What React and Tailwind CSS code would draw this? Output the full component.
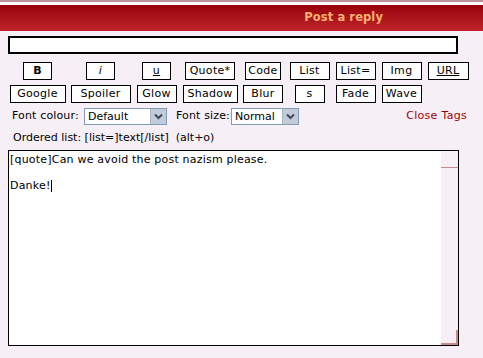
const row1 = [
  { label: 'B', w: 'w-[29px]', cls: 'font-bold' },
  { label: 'i', w: 'w-[29px]', cls: 'italic' },
  { label: 'u', w: 'w-[29px]', cls: 'underline' },
  { label: 'Quote*', w: 'w-[50px]' },
  { label: 'Code', w: 'w-[36px]' },
  { label: 'List', w: 'w-[40px]' },
  { label: 'List=', w: 'w-[40px]' },
  { label: 'Img', w: 'w-[40px]' },
  { label: 'URL', w: 'w-[41px]', cls: 'underline' },
]

const row2 = [
  { label: 'Google', w: 'w-[56px]' },
  { label: 'Spoiler', w: 'w-[60px]' },
  { label: 'Glow', w: 'w-[40px]' },
  { label: 'Shadow', w: 'w-[55px]' },
  { label: 'Blur', w: 'w-[40px]' },
  { label: 's', w: 'w-[30px]' },
  { label: 'Fade', w: 'w-[40px]' },
  { label: 'Wave', w: 'w-[40px]' },
]

function TagButton({ label, w, cls = '' }) {
  return (
    <button
      type="button"
      className={`${w} h-[18px] border border-black bg-white text-[11px] leading-[16px] tracking-[0.3px] text-black ${cls}`}
    >
      {label}
    </button>
  )
}

function SelectBox({ value, w }) {
  return (
    <div className={`${w} h-[17px] flex border border-[#7f9db9] bg-white`}>
      <span className="flex-1 pl-[3px] text-[11px] leading-[15px] text-black">{value}</span>
      <span className="w-[16px] h-full bg-[#c3cbd9] border-l border-[#a8b4c8] flex items-center justify-center">
        <svg width="9" height="7" viewBox="0 0 9 7">
          <path d="M1 1.5 L4.5 5 L8 1.5" fill="none" stroke="#3b4a63" strokeWidth="2" />
        </svg>
      </span>
    </div>
  )
}

export default function App() {
  return (
    <div
      className="w-[483px] h-[358px] overflow-hidden bg-[#f7eff6] text-black"
      style={{ fontFamily: '"DejaVu Sans", Verdana, sans-serif' }}
    >
      {/* header bar */}
      <div className="h-[2px] bg-[#b8949a]" />
      <div className="h-[3px] bg-white" />
      <div className="h-[26px] bg-gradient-to-b from-[#980008] to-[#c0242c] flex items-center justify-end pr-[100px]">
        <span className="text-[11.5px] font-bold text-[#f9b072] tracking-[0.1px]">Post a reply</span>
      </div>

      {/* subject */}
      <div className="pl-[8px] pt-[5px]">
        <div className="w-[450px] h-[18px] bg-white border-2 border-black" />
      </div>

      {/* tag buttons */}
      <div className="ml-[7px] mt-[8px] grid grid-cols-[61px_65px_47px_60px_46px_47px_45px_47px_46px] gap-y-[5px] justify-items-center">
        {row1.map((b) => (
          <TagButton key={b.label} {...b} />
        ))}
        {row2.map((b) => (
          <TagButton key={b.label} {...b} />
        ))}
      </div>

      {/* font options */}
      <div className="mt-[5px] pl-[12px] pr-[16px] flex items-center h-[17px] text-[11px]">
        <span className="w-[72px] tracking-[0.15px]">Font colour:</span>
        <SelectBox value="Default" w="w-[83px]" />
        <span className="ml-[9px] w-[55px] tracking-[0.15px]">Font size:</span>
        <SelectBox value="Normal" w="w-[68px]" />
        <span className="ml-auto text-[#a00000] tracking-[0.3px]">Close Tags</span>
      </div>

      <div className="pl-[13px] mt-[6px] text-[11px] leading-[13px]">
        Ordered list: [list=]text[/list]&nbsp; (alt+o)
      </div>

      {/* message */}
      <div className="ml-[8px] mt-[6px] w-[451px] h-[196px] border border-black flex">
        <div className="flex-1 bg-white pl-[1px] pt-[2px] text-[11px] leading-[13px] tracking-[0.2px]">
          <p>[quote]Can we avoid the post nazism please.</p>
          <p className="mt-[13px]">
            Danke!<span className="inline-block w-px h-[12px] bg-black align-middle" />
          </p>
        </div>
        <div className="w-[17px] flex flex-col justify-between">
          <div className="h-[17px] border-b border-[#c88a8a]" />
          <div className="h-[15px] border-b-2 border-r-2 border-[#c88a8a]" />
        </div>
      </div>
    </div>
  )
}
